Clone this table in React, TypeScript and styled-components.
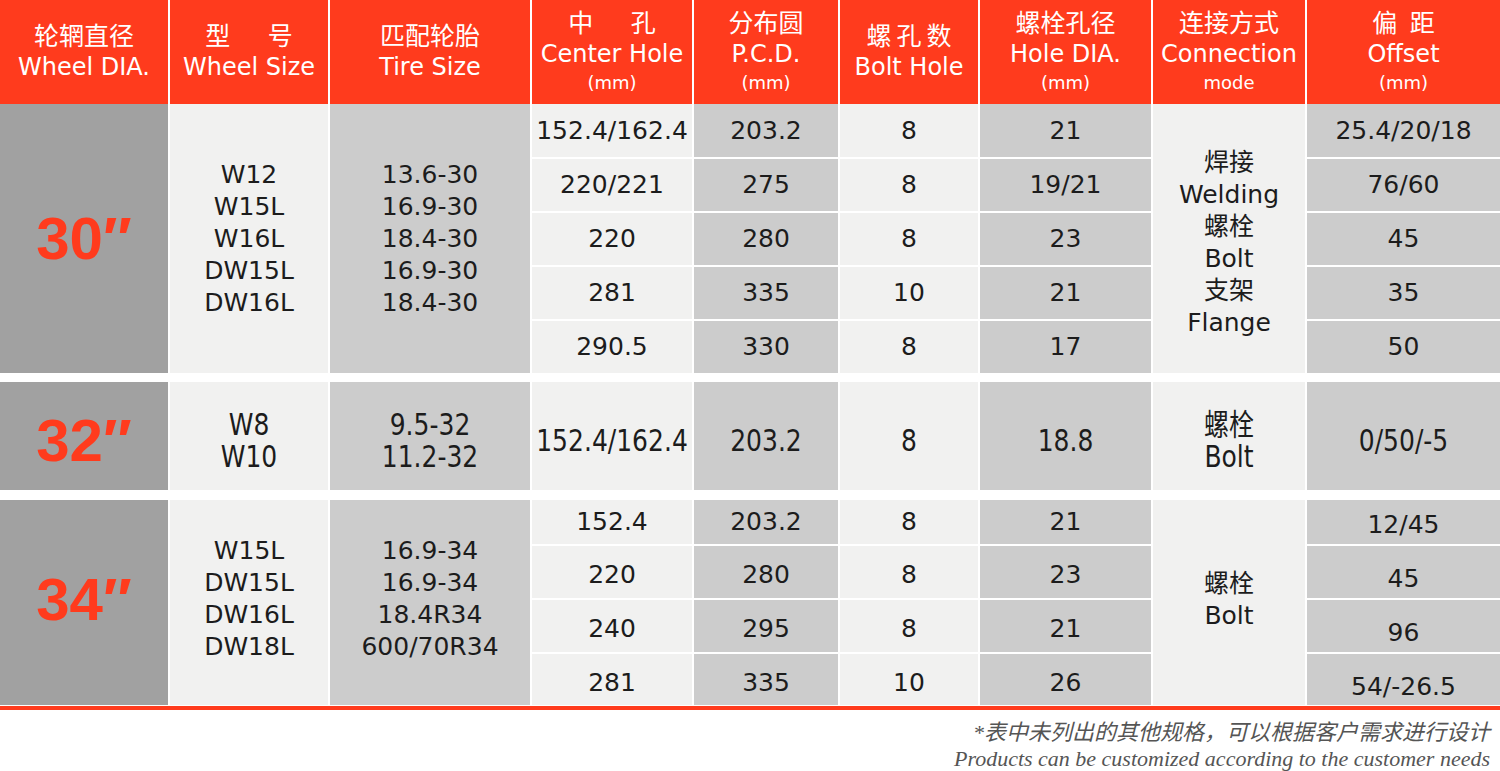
import React from 'react'
import styled, { createGlobalStyle } from 'styled-components'

const RED = '#ff3b1d'
const COLS = '168px 158px 200px 160px 144px 138px 171px 152px 1fr'

type Tone = 'dark' | 'mid' | 'light'

const tones: Tone[] = ['dark', 'light', 'mid', 'light', 'mid', 'light', 'mid', 'light', 'mid']

const toneColor = {
  dark: '#a1a1a1',
  mid: '#cccccc',
  light: '#f1f1f0',
}

type Line = {
  center: string
  pcd: string
  bolt: string
  hole: string
  offset: string
  nudge?: number
  offsetNudge?: number
}

// nudges: positive pushes text down, negative lifts it (matches the source artwork)
type SizeGroup = {
  size: string
  rows: string
  gapTop: number
  tall?: boolean
  sizeNudge?: number
  specNudge?: number
  connNudge?: number
  models: string[]
  tires: string[]
  connection: string[]
  lines: Line[]
}

const headers = [
  { cn: '轮辋直径', en: 'Wheel DIA.' },
  { cn: '型\u2003\u2002号', en: 'Wheel Size' },
  { cn: '匹配轮胎', en: 'Tire Size' },
  { cn: '中\u2003\u2002孔', en: 'Center Hole', unit: '(mm)' },
  { cn: '分布圆', en: 'P.C.D.', unit: '(mm)' },
  { cn: '螺\u2009孔\u2009数', en: 'Bolt Hole' },
  { cn: '螺栓孔径', en: 'Hole DIA.', unit: '(mm)' },
  { cn: '连接方式', en: 'Connection', unit: 'mode' },
  { cn: '偏\u2002距', en: 'Offset', unit: '(mm)' },
]

const groups: SizeGroup[] = [
  {
    size: '30',
    rows: '53px 52px 52px 52px 52px',
    gapTop: 0,
    connNudge: 8,
    models: ['W12', 'W15L', 'W16L', 'DW15L', 'DW16L'],
    tires: ['13.6-30', '16.9-30', '18.4-30', '16.9-30', '18.4-30'],
    connection: ['焊接', 'Welding', '螺栓', 'Bolt', '支架', 'Flange'],
    lines: [
      { center: '152.4/162.4', pcd: '203.2', bolt: '8', hole: '21', offset: '25.4/20/18' },
      { center: '220/221', pcd: '275', bolt: '8', hole: '19/21', offset: '76/60' },
      { center: '220', pcd: '280', bolt: '8', hole: '23', offset: '45' },
      { center: '281', pcd: '335', bolt: '10', hole: '21', offset: '35' },
      { center: '290.5', pcd: '330', bolt: '8', hole: '17', offset: '50' },
    ],
  },
  {
    size: '32',
    rows: '108px',
    gapTop: 9,
    tall: true,
    sizeNudge: 10,
    specNudge: 10,
    connNudge: 10,
    models: ['W8', 'W10'],
    tires: ['9.5-32', '11.2-32'],
    connection: ['螺栓', 'Bolt'],
    lines: [
      {
        center: '152.4/162.4',
        pcd: '203.2',
        bolt: '8',
        hole: '18.8',
        offset: '0/50/-5',
        nudge: 10,
        offsetNudge: 10,
      },
    ],
  },
  {
    size: '34',
    rows: '44px 52px 52px 51px',
    gapTop: 10,
    sizeNudge: -6,
    specNudge: -8,
    connNudge: -6,
    models: ['W15L', 'DW15L', 'DW16L', 'DW18L'],
    tires: ['16.9-34', '16.9-34', '18.4R34', '600/70R34'],
    connection: ['螺栓', 'Bolt'],
    lines: [
      { center: '152.4', pcd: '203.2', bolt: '8', hole: '21', offset: '12/45', offsetNudge: 6 },
      { center: '220', pcd: '280', bolt: '8', hole: '23', offset: '45', nudge: 6, offsetNudge: 14 },
      { center: '240', pcd: '295', bolt: '8', hole: '21', offset: '96', nudge: 6, offsetNudge: 14 },
      { center: '281', pcd: '335', bolt: '10', hole: '26', offset: '54/-26.5', nudge: 6, offsetNudge: 14 },
    ],
  },
]

function TextLines({ items, tall }: { items: string[]; tall?: boolean }) {
  return (
    <>
      {items.map((t, i) => (
        <Value key={i} $tall={tall}>
          {t}
        </Value>
      ))}
    </>
  )
}

function GroupBlock({ group }: { group: SizeGroup }) {
  const span = group.lines.length
  return (
    <Group $rows={group.rows} $gapTop={group.gapTop}>
      <Cell $tone="dark" $span={span} $nudge={group.sizeNudge}>
        <SizeMark>{group.size}″</SizeMark>
      </Cell>
      <Cell $tone="light" $span={span} $nudge={group.specNudge}>
        <TextLines items={group.models} tall={group.tall} />
      </Cell>
      <Cell $tone="mid" $span={span} $nudge={group.specNudge}>
        <TextLines items={group.tires} tall={group.tall} />
      </Cell>
      {group.lines.map((line, i) => {
        const values = [line.center, line.pcd, line.bolt, line.hole]
        return (
          <React.Fragment key={i}>
            {values.map((v, j) => (
              <Cell key={j} $tone={tones[3 + j]} $nudge={line.nudge}>
                <Value $tall={group.tall}>{v}</Value>
              </Cell>
            ))}
            {i === 0 && (
              <Cell $tone="light" $span={span} $nudge={group.connNudge}>
                <TextLines items={group.connection} tall={group.tall} />
              </Cell>
            )}
            <Cell $tone="mid" $nudge={line.offsetNudge}>
              <Value $tall={group.tall}>{line.offset}</Value>
            </Cell>
          </React.Fragment>
        )
      })}
    </Group>
  )
}

export default function App() {
  return (
    <>
      <GlobalStyle />
      <Sheet>
        <HeaderRow>
          {headers.map((h, i) => (
            <HeadCell key={i}>
              <HeadCn>{h.cn}</HeadCn>
              <HeadEn>{h.en}</HeadEn>
              {h.unit && <HeadUnit>{h.unit}</HeadUnit>}
            </HeadCell>
          ))}
        </HeaderRow>
        {groups.map((g) => (
          <GroupBlock key={g.size} group={g} />
        ))}
        <BottomRule />
        <Note>
          <NoteCn>*表中未列出的其他规格，可以根据客户需求进行设计</NoteCn>
          <NoteEn>Products can be customized according to the customer needs</NoteEn>
        </Note>
      </Sheet>
    </>
  )
}

const GlobalStyle = createGlobalStyle`
  body {
    margin: 0;
    background: #ffffff;
  }
`

const Sheet = styled.div`
  width: 1500px;
  display: flex;
  flex-direction: column;
  font-family: 'DejaVu Sans', 'Noto Sans CJK SC', sans-serif;
`

const HeaderRow = styled.div`
  display: grid;
  grid-template-columns: ${COLS};
  column-gap: 2px;
  height: 104px;
`

const HeadCell = styled.div`
  background: ${RED};
  color: #ffffff;
  display: flex;
  flex-direction: column;
  align-items: center;
  justify-content: center;
  text-align: center;
  white-space: nowrap;
`

const HeadCn = styled.span`
  font-size: 25px;
  line-height: 31px;
`

const HeadEn = styled.span`
  font-size: 24px;
  line-height: 31px;
`

const HeadUnit = styled.span`
  font-size: 18px;
  line-height: 26px;
`

const Group = styled.div<{ $rows: string; $gapTop: number }>`
  display: grid;
  grid-template-columns: ${COLS};
  grid-template-rows: ${(p) => p.$rows};
  gap: 2px;
  margin-top: ${(p) => p.$gapTop}px;
`

const Cell = styled.div<{ $tone: Tone; $span?: number; $nudge?: number }>`
  background: ${(p) => toneColor[p.$tone]};
  grid-row: ${(p) => (p.$span ? `span ${p.$span}` : 'auto')};
  display: flex;
  flex-direction: column;
  align-items: center;
  justify-content: center;
  padding-top: ${(p) => Math.max(p.$nudge ?? 0, 0)}px;
  padding-bottom: ${(p) => Math.max(-(p.$nudge ?? 0), 0)}px;
  color: #1c1c1c;
  font-size: 25px;
  line-height: 32px;
  white-space: nowrap;
`

const Value = styled.span<{ $tall?: boolean }>`
  display: inline-block;
  transform: ${(p) => (p.$tall ? 'scaleY(1.2)' : 'none')};
`

const SizeMark = styled.span`
  font-family: 'Liberation Sans', sans-serif;
  font-weight: bold;
  font-size: 60px;
  line-height: 64px;
  color: ${RED};
`

const BottomRule = styled.div`
  height: 4px;
  margin-top: 1px;
  background: ${RED};
`

const Note = styled.div`
  display: flex;
  flex-direction: column;
  align-items: flex-end;
  padding: 10px 10px 0 0;
  color: #555555;
  font-style: italic;
  font-family: 'Liberation Serif', 'Noto Sans CJK SC', serif;
`

const NoteCn = styled.span`
  font-size: 22px;
  line-height: 26px;
`

const NoteEn = styled.span`
  font-size: 22px;
  line-height: 26px;
`
